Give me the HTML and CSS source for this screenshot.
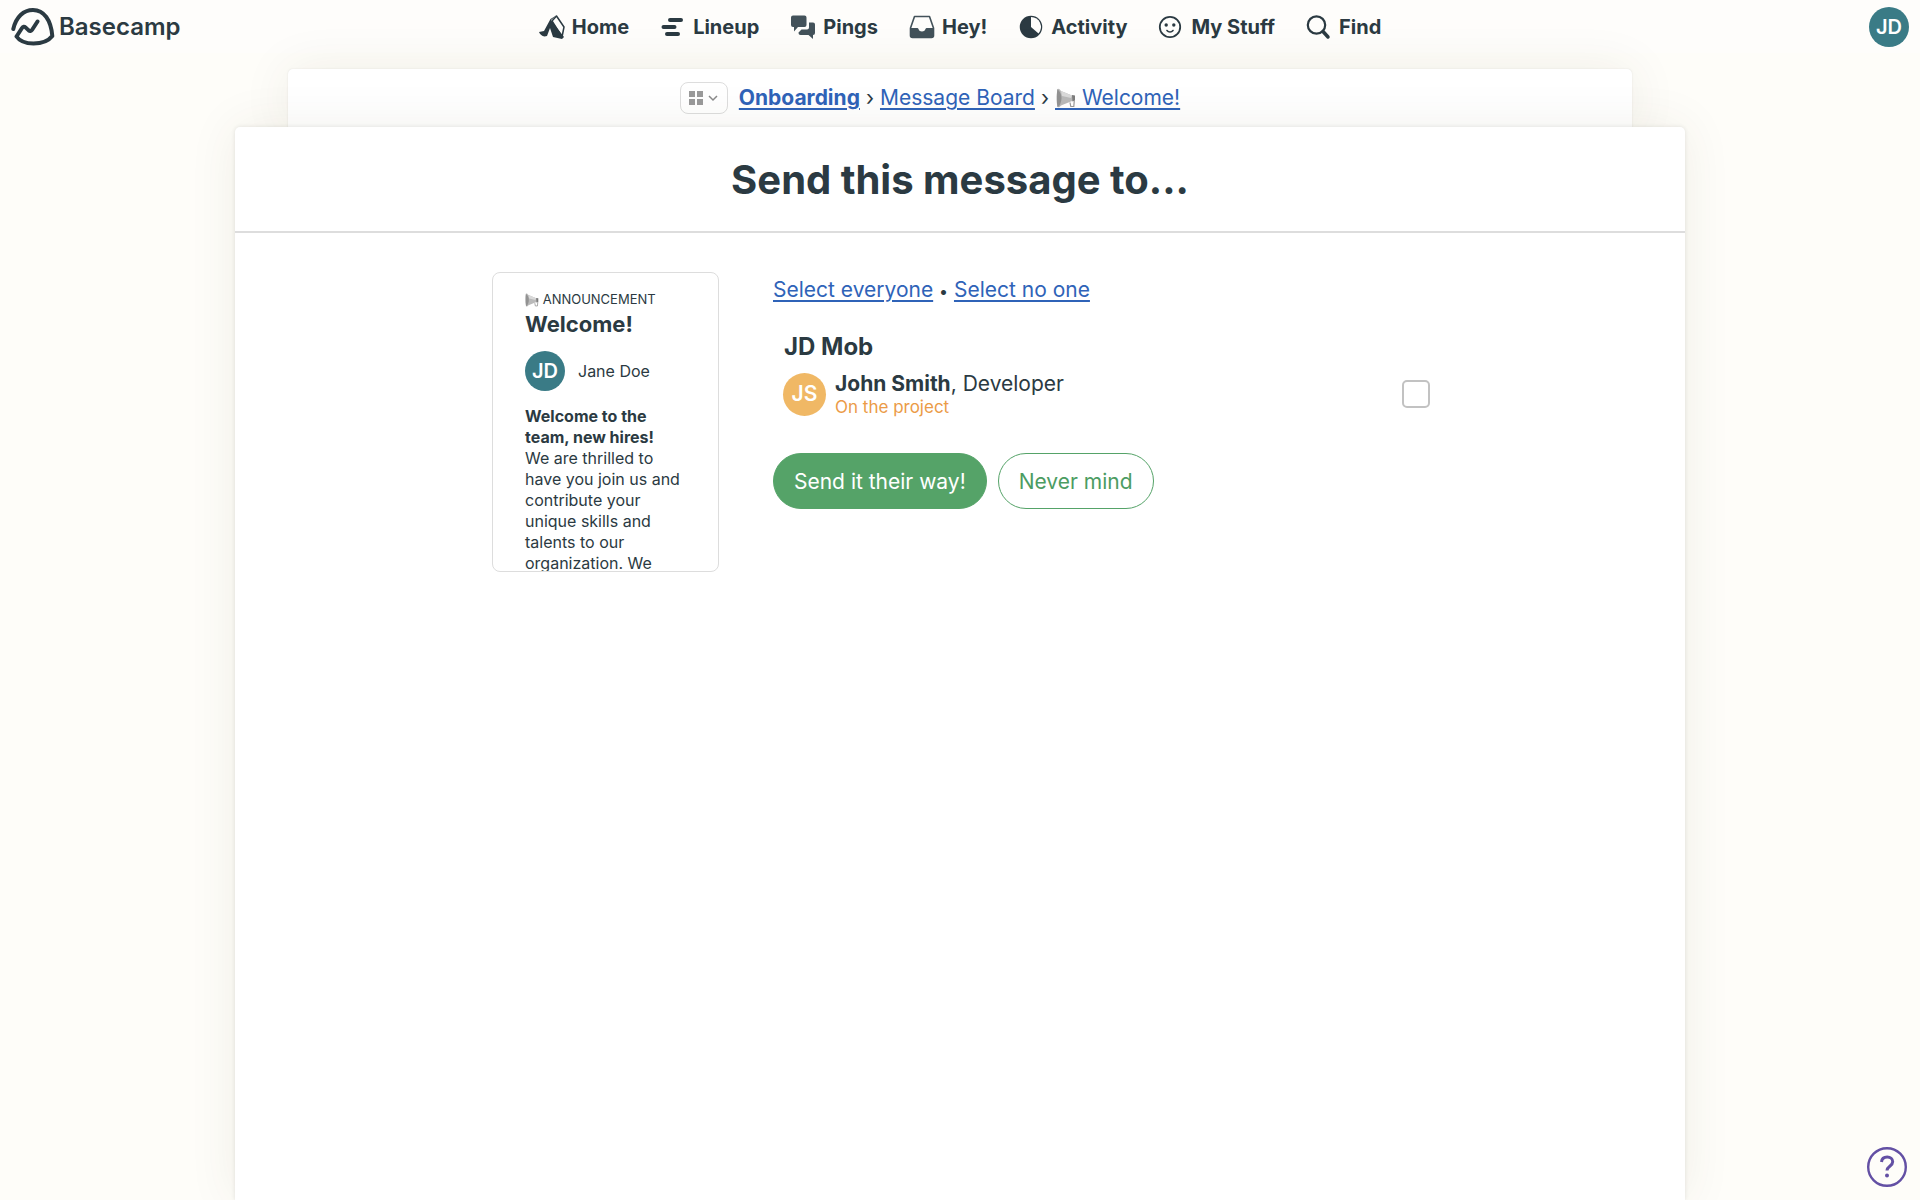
FILE: index.html
```html
<!DOCTYPE html>
<html lang="en">
<head>
    <meta charset="UTF-8">
    <meta name="viewport" content="width=device-width, initial-scale=1.0">
    <title>Send this message to...</title>
    <link rel="stylesheet" href="styles.css">
</head>
<body>

    <!-- Shared megaphone icon -->
    <svg class="sprite" aria-hidden="true">
        <symbol id="megaphone" viewBox="0 0 20 20">
            <path d="M1 1.500C2.200 0 3.500 1 5 3l11 4.500c2 .2 3 1.500 2.500 3.500-.3 1.500-1.500 2.300-3 2.200L5 17.500C3.500 19.500 2 20 1.500 18.500z" fill="#b9b9b9"/>
            <path d="M1.500 1.500c2 1 4 5 4 8.500s-1.500 8-4 9C.5 15 .3 6 1.500 1.500z" fill="#929292"/>
            <path d="M5 3l11 4.500-1 2.500L6 8z" fill="#d9d9d9"/>
            <path d="M16 7l3 .5v5l-2.500 1z" fill="#7c7c7c"/>
            <path d="M14 14.500l.8 4h3l.5-6" fill="none" stroke="#999" stroke-width="1.200"/>
        </symbol>
    </svg>

    <nav class="topbar">
        <a class="logo" href="#">
            <svg width="44" height="40" viewBox="0 0 44 40" fill="none" stroke="#2b3a42" stroke-width="4" stroke-linecap="round" stroke-linejoin="round">
                <path d="M2.300 22C5 10 12.500 3 22 3c11 0 18 10 19.300 26C37 34.500 30 36.500 22.500 36.500 15 36.500 8.500 34 5.500 29.500L11 21c1-1.600 2.300-1.700 3.500-.6l3.200 3c1.200 1 2.500.8 3.300-.4l5.500-8.500"/>
            </svg>
            Basecamp
        </a>
        <div class="menu">
            <a href="#">
                <svg width="26" height="26" viewBox="0 0 26 26">
                    <path d="M17.500 2l7.500 11-2 10L13 7z" fill="#fefdfb" stroke="#2b3a42" stroke-width="1.500" stroke-linejoin="round"/>
                    <path d="M18 1l-6.500 4L5 17 0 18c1 2.500 3 4 5.500 4.500L8 22l3-8 3 9 9 2 2-2L12 6z" fill="#2b3a42"/>
                </svg>
                Home
            </a>
            <a href="#">
                <svg width="26" height="26" viewBox="0 0 26 26" stroke="#2b3a42" stroke-width="4" stroke-linecap="round">
                    <path d="M10 6h11M3.500 13h11M7 20h11"/>
                </svg>
                Lineup
            </a>
            <a href="#">
                <svg width="26" height="26" viewBox="0 0 26 26" fill="#43525a">
                    <path d="M3 1.500h11.500a2 2 0 0 1 2 2V11a2 2 0 0 1-2 2H8l-4 4.500V13H3a2 2 0 0 1-2-2V3.500a2 2 0 0 1 2-2z"/>
                    <path d="M19 8.500h4a2 2 0 0 1 2 2V19a2 2 0 0 1-2 2v4l-4.500-4h-8a2 2 0 0 1-2-2v-.5l3-3H17a2 2 0 0 0 2-2z"/>
                </svg>
                Pings
            </a>
            <a href="#">
                <svg width="26" height="26" viewBox="0 0 26 26">
                    <path d="M5.500 2.500h15L24.500 14v7.500a2 2 0 0 1-2 2h-19a2 2 0 0 1-2-2V14z" fill="none" stroke="#43525a" stroke-width="1.600" stroke-linejoin="round"/>
                    <path d="M1.500 14H8.500c1.200 0 1 3.500 4.500 3.500s3.300-3.500 4.500-3.500h7v7.500a2 2 0 0 1-2 2h-19a2 2 0 0 1-2-2z" fill="#43525a"/>
                </svg>
                Hey!
            </a>
            <a href="#">
                <svg width="26" height="26" viewBox="0 0 26 26">
                    <circle cx="13" cy="13" r="10.500" fill="#2b3a42" stroke="#2b3a42" stroke-width="1.500"/>
                    <path d="M13 3v10l7.500 6.500A10 10 0 0 0 13 3z" fill="#fefdfb"/>
                </svg>
                Activity
            </a>
            <a href="#">
                <svg width="26" height="26" viewBox="0 0 26 26">
                    <circle cx="12" cy="13" r="10.200" fill="none" stroke="#2b3a42" stroke-width="1.800"/>
                    <circle cx="8.200" cy="11" r="1.700" fill="#2b3a42"/>
                    <circle cx="15.800" cy="11" r="1.700" fill="#2b3a42"/>
                    <path d="M9 16.500c1.500 2 4.500 2 6 0" fill="none" stroke="#2b3a42" stroke-width="1.600" stroke-linecap="round"/>
                </svg>
                My Stuff
            </a>
            <a href="#">
                <svg width="26" height="26" viewBox="0 0 26 26" fill="none" stroke="#2b3a42" stroke-linecap="round">
                    <circle cx="10.500" cy="11" r="8.700" stroke-width="2.200"/>
                    <path d="M17 17.500l5 5.500" stroke-width="3.500"/>
                </svg>
                Find
            </a>
        </div>
        <a class="me" href="#"><span class="avatar">JD</span></a>
    </nav>

    <div class="crumbs">
        <button class="tools-btn" aria-label="Project tools">
            <svg width="32" height="16" viewBox="0 0 32 16">
                <path d="M1 1h6v6H1zM9 1h6v6H9zM1 9h6v6H1zM9 9h6v6H9z" fill="#9a9a9a"/>
                <path d="M21 6l4 4 4-4" fill="none" stroke="#8a8a8a" stroke-width="1.500"/>
            </svg>
        </button>
        <a href="#"><b>Onboarding</b></a>
        <span>›</span>
        <a href="#">Message Board</a>
        <span>›</span>
        <a class="current" href="#"><svg class="horn" width="20" height="20"><use href="#megaphone"/></svg>&emsp;&nbsp;Welcome!</a>
    </div>

    <main class="panel">
        <h1>Send this message to...</h1>

        <div class="panel-body">
            <div class="preview">
                <p class="category"><svg width="14" height="14"><use href="#megaphone"/></svg> ANNOUNCEMENT</p>
                <h2>Welcome!</h2>
                <div class="author">
                    <span class="avatar">JD</span>
                    <span>Jane Doe</span>
                </div>
                <p><b>Welcome to the team, new hires!</b></p>
                <p>We are thrilled to have you join us and contribute your unique skills and talents to our organization. We</p>
            </div>

            <form class="recipients">
                <p class="select-links"><a href="#">Select everyone</a> <span>•</span> <a href="#">Select no one</a></p>

                <h3>JD Mob</h3>
                <label class="person" for="johnSmith">
                    <span class="avatar avatar-js">JS</span>
                    <span class="who">
                        <span><b>John Smith</b>, Developer</span>
                        <small>On the project</small>
                    </span>
                    <input type="checkbox" id="johnSmith">
                </label>

                <div class="actions">
                    <button class="btn btn-send" type="button">Send it their way!</button>
                    <button class="btn btn-cancel" type="button">Never mind</button>
                </div>
            </form>
        </div>
    </main>

    <button class="help-btn" aria-label="Help">
        <svg width="42" height="42" viewBox="0 0 42 42" fill="none" stroke="#6350a4">
            <circle cx="21" cy="21" r="18.800" stroke-width="2.400"/>
            <path d="M15.500 16c.3-3.200 2.500-5 5.700-5 3.300 0 5.500 1.900 5.500 4.800 0 4.500-5.700 4.400-5.700 8.700" stroke-width="3"/>
            <circle cx="21" cy="29.500" r="2" fill="#6350a4" stroke="none"/>
        </svg>
    </button>

</body>
</html>
```

FILE: styles.css
```css
* { box-sizing: border-box; }
body {
    margin: 0; min-height: 100vh; display: flex; flex-direction: column;
    font-family: Inter, sans-serif; font-size: 21px; line-height: 28px;
    color: #2b3a42; background: #fefdf9;
}
h1, h2, h3, p { margin: 0; }
a { color: #2f63b8; text-decoration-thickness: 2px; text-underline-offset: 3px; }
button { font-family: inherit; cursor: pointer; }
.sprite { position: absolute; width: 0; height: 0; }

.avatar {
    display: flex; align-items: center; justify-content: center;
    width: 40px; height: 40px; border-radius: 50%;
    background: #3a7b86; color: white; font-size: 20px; font-weight: 600;
}

/* Top navigation */
.topbar {
    display: grid; grid-template-columns: 1fr auto 1fr; align-items: center;
    height: 53px; padding: 0 11px; background: #fefdfb;
}
.topbar a { color: #2b3a42; text-decoration: none; }
.topbar .avatar { color: white; }
.logo { display: flex; align-items: center; gap: 4px; font-size: 24px; font-weight: 600; }
.menu { display: flex; gap: 31px; font-size: 20px; font-weight: 700; }
.menu a { display: flex; align-items: center; gap: 7px; }
.me { justify-self: end; }

/* Breadcrumb sheet behind the panel */
.crumbs {
    display: flex; align-items: center; justify-content: center; gap: 6px;
    width: 70%; height: 58px; margin: 16px auto 0; padding-right: 60px;
    background: white; border-radius: 5px 5px 0 0;
    box-shadow: 0 0 50px rgba(80, 60, 30, 0.08), 0 0 2px rgba(0, 0, 0, 0.1);
}
.crumbs a { white-space: nowrap; }
.tools-btn {
    display: flex; align-items: center; justify-content: center;
    width: 48px; height: 32px; margin-right: 5px; padding: 0;
    background: white; border: 1px solid #ddd; border-radius: 8px;
}
.current { position: relative; }
.horn { position: absolute; left: 1px; top: 4px; }

/* Main panel */
.panel {
    position: relative; flex: 1; width: calc(100% - 470px); margin: 0 auto;
    background: white; border-radius: 5px 5px 0 0;
    box-shadow: 0 0 50px rgba(80, 60, 30, 0.08), 0 0 4px rgba(0, 0, 0, 0.1);
}
h1 {
    padding: 27px 0 25px; text-align: center;
    font-size: 40px; line-height: 52px; font-weight: 700;
    border-bottom: 2px solid #ddd;
}
.panel-body { display: flex; gap: 54px; width: 940px; margin: 39px auto 0; padding-left: 2px; }
.preview {
    flex: none; width: 227px; height: 300px; padding: 14px 32px; overflow: hidden;
    border: 1px solid #ddd; border-radius: 8px;
    font-size: 16px; line-height: 21px;
}
.category { font-size: 13px; line-height: 24px; white-space: nowrap; }
.category svg { vertical-align: -3px; }
h2 { font-size: 22px; line-height: 26px; font-weight: 700; }
.author { display: flex; align-items: center; gap: 13px; margin: 14px 0 15px; }

/* Recipients */
.recipients { flex: 1; }
.select-links { padding-top: 4px; }
.select-links span { font-size: 16px; }
h3 { margin: 28px 0 10px 11px; font-size: 24px; line-height: 28px; }
.person { display: flex; align-items: center; gap: 9px; padding-left: 10px; }
.avatar-js { width: 43px; height: 43px; background: #f0b865; font-size: 21px; }
.who { flex: 1; display: flex; flex-direction: column; line-height: 26px; }
.who small { font-size: 17px; line-height: 20px; color: #eb9b47; }
.person input {
    appearance: none; width: 28px; height: 28px; margin: 0;
    background: white; border: 2px solid #c2c2c2; border-radius: 5px;
}
.person input:checked { background: #55a368; }
.actions { display: flex; gap: 11px; margin-top: 36px; }
.btn {
    height: 56px; padding: 0 20px; border: 1px solid #55a368; border-radius: 28px;
    font-size: 21px; white-space: nowrap;
}
.btn-send { background: #55a368; color: white; }
.btn-cancel { background: white; color: #4c9c62; }

.help-btn {
    position: fixed; right: 12px; bottom: 12px;
    display: flex; padding: 0; background: none; border: none;
}
```
